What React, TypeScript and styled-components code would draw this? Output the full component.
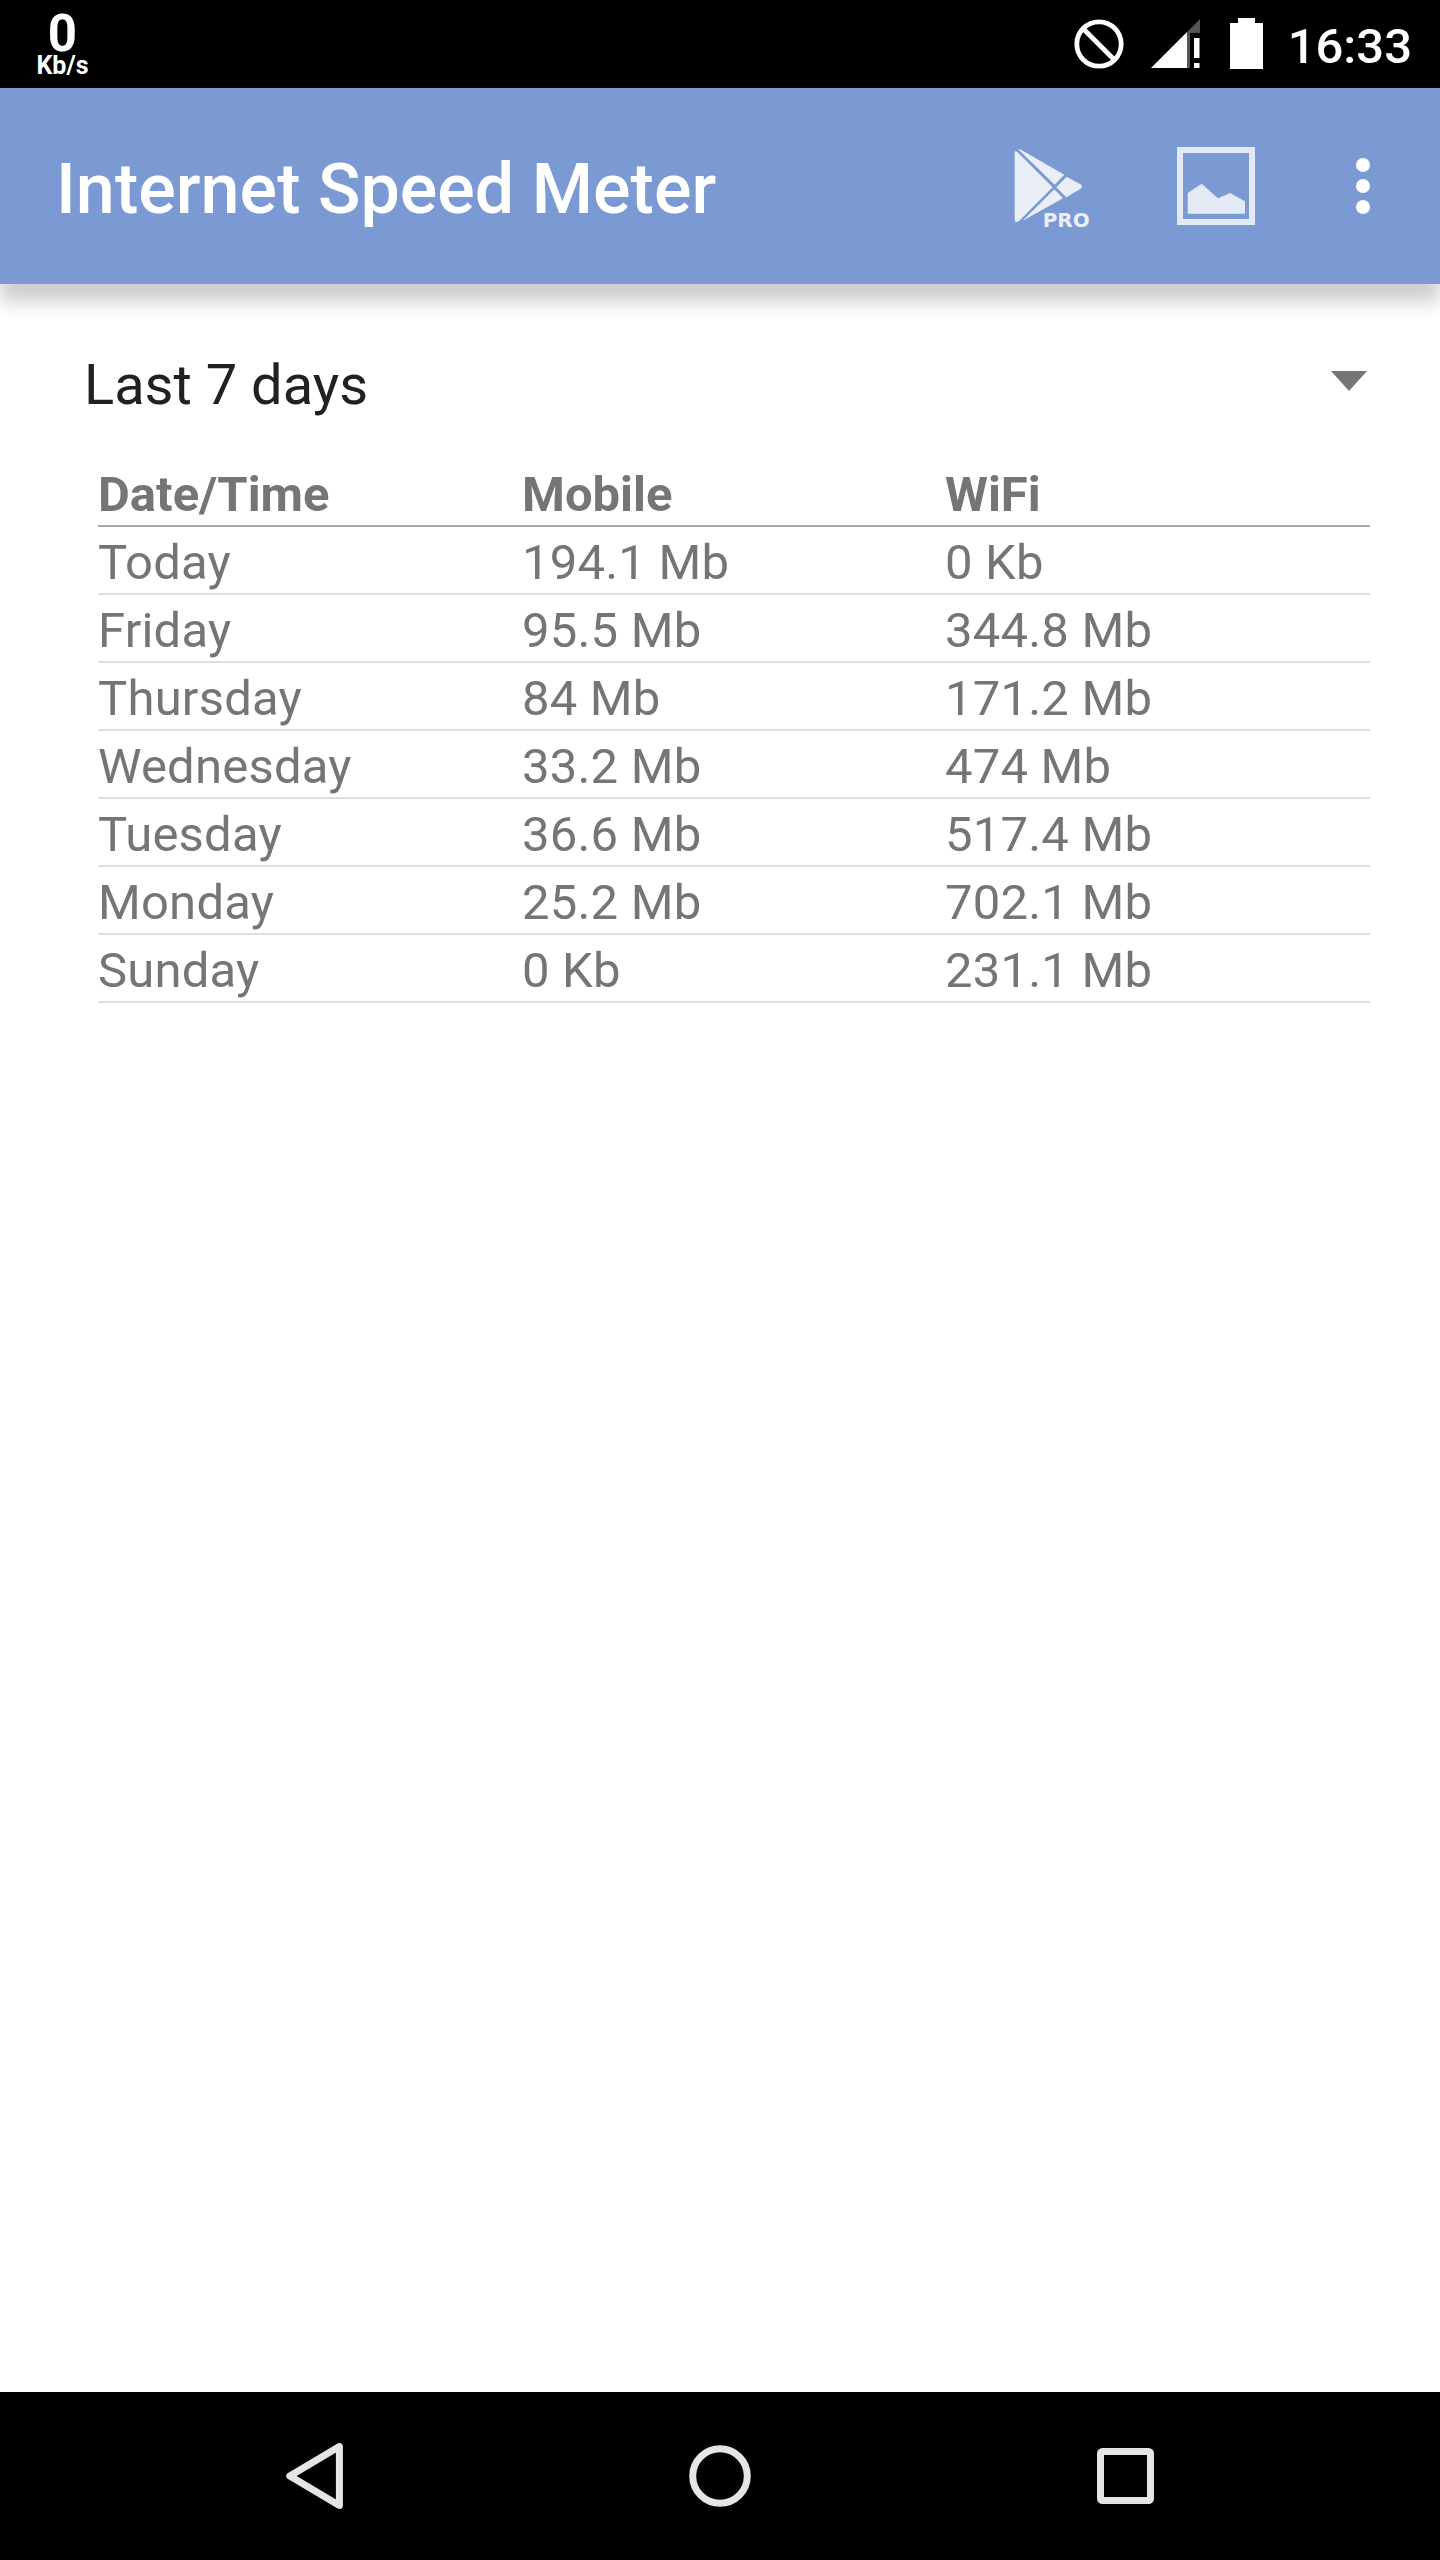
import { FC } from 'react'
import styled, { createGlobalStyle } from 'styled-components'

const usage = [
  { day: 'Today', mobile: '194.1 Mb', wifi: '0 Kb' },
  { day: 'Friday', mobile: '95.5 Mb', wifi: '344.8 Mb' },
  { day: 'Thursday', mobile: '84 Mb', wifi: '171.2 Mb' },
  { day: 'Wednesday', mobile: '33.2 Mb', wifi: '474 Mb' },
  { day: 'Tuesday', mobile: '36.6 Mb', wifi: '517.4 Mb' },
  { day: 'Monday', mobile: '25.2 Mb', wifi: '702.1 Mb' },
  { day: 'Sunday', mobile: '0 Kb', wifi: '231.1 Mb' },
]

const BlockedIcon: FC = () => (
  <svg width="50" height="50" viewBox="0 0 50 50" fill="none" stroke="#fff" strokeWidth="4.8">
    <circle cx="25" cy="25" r="22.2" />
    <path d="M9.5 10 40 40.5" />
  </svg>
)

const SignalIcon: FC = () => (
  <svg width="49" height="50" viewBox="0 0 49 50">
    <path d="M36 13 49 0V14H39V49H36Z" fill="#555" />
    <path d="M0 49 36 13V49Z" fill="#fff" />
    <path d="M43 19h5.500v20h-5.500zM43 44h5.500v5h-5.500z" fill="#fff" />
  </svg>
)

const BatteryIcon: FC = () => (
  <svg width="33" height="51" viewBox="0 0 33 51">
    <path d="M8 0H25V5H33V51H0V5H8Z" fill="#fff" />
  </svg>
)

const PlayProIcon: FC = () => (
  <svg width="86" height="88" viewBox="96 78 258 264" fill="#e9eef7">
    <path d="M104 97q0-6 7-2L218 202 117 303q-13 8-13-4Z" />
    <path d="M116 89q1-3 7 0L253 164 224 194Z" />
    <path d="M260 170 301 193q10 7 0 14L259 232 229 202Z" />
    <path d="M223 208 249 235 128 302Z" />
    <text x="188" y="320" fontFamily="DejaVu Sans, sans-serif" fontWeight="bold" fontSize="60">
      PRO
    </text>
  </svg>
)

const PictureIcon: FC = () => (
  <svg width="78" height="78" viewBox="0 0 78 78">
    <rect x="3" y="3" width="72" height="72" fill="none" stroke="#e3eaf6" strokeWidth="6" />
    <path d="M10.700 46 24.700 36.700 41 51.300 53 46 68 54.300V66.700H10.700Z" fill="#e3eaf6" />
  </svg>
)

const MoreIcon: FC = () => (
  <svg width="14" height="56" viewBox="0 0 14 56" fill="#fff">
    <circle cx="7" cy="7" r="7" />
    <circle cx="7" cy="28" r="7" />
    <circle cx="7" cy="49" r="7" />
  </svg>
)

const BackIcon: FC = () => (
  <svg width="57" height="66" viewBox="0 0 57 66">
    <path d="M53.400 3.600V62.400L3.800 33Z" fill="none" stroke="#e5e5e5" strokeWidth="7" strokeLinejoin="round" />
  </svg>
)

const HomeIcon: FC = () => (
  <svg width="62" height="62" viewBox="0 0 62 62">
    <circle cx="31" cy="31" r="27.300" fill="none" stroke="#e5e5e5" strokeWidth="7" />
  </svg>
)

const RecentsIcon: FC = () => (
  <svg width="57" height="56" viewBox="0 0 57 56">
    <rect x="3.500" y="3.500" width="50" height="49" rx="2" fill="none" stroke="#e5e5e5" strokeWidth="7" />
  </svg>
)

const App: FC = () => (
  <Screen>
    <GlobalStyle />
    <StatusBar>
      <Speed>
        <SpeedValue>0</SpeedValue>
        <SpeedUnit>Kb/s</SpeedUnit>
      </Speed>
      <StatusIcons>
        <BlockedIcon />
        <SignalIcon />
        <BatteryIcon />
      </StatusIcons>
      <Clock>16:33</Clock>
    </StatusBar>
    <AppBar>
      <Title>Internet Speed Meter</Title>
      <PlayAction $gap={79}>
        <PlayProIcon />
      </PlayAction>
      <Action $gap={101}>
        <PictureIcon />
      </Action>
      <Action $gap={70}>
        <MoreIcon />
      </Action>
    </AppBar>
    <Content>
      <Spinner>
        <span>Last 7 days</span>
        <Arrow viewBox="0 0 36 20">
          <path d="M0 0H36L18 20Z" />
        </Arrow>
      </Spinner>
      <HeaderRow>
        <span>Date/Time</span>
        <span>Mobile</span>
        <span>WiFi</span>
      </HeaderRow>
      {usage.map(({ day, mobile, wifi }) => (
        <Row key={day}>
          <span>{day}</span>
          <span>{mobile}</span>
          <span>{wifi}</span>
        </Row>
      ))}
    </Content>
    <NavBar>
      <BackIcon />
      <HomeIcon />
      <RecentsIcon />
    </NavBar>
  </Screen>
)

const GlobalStyle = createGlobalStyle`
  * {
    box-sizing: border-box;
  }
  body {
    margin: 0;
    font-family: Roboto, sans-serif;
  }
  svg {
    display: block;
    flex: none;
  }
`

const Screen = styled.div`
  display: flex;
  flex-direction: column;
  width: 1440px;
  height: 2560px;
  background: #fff;
`

const StatusBar = styled.div`
  display: flex;
  height: 88px;
  padding-right: 28px;
  color: #fff;
  background: #000;
`

const Speed = styled.div`
  display: flex;
  flex-direction: column;
  align-items: center;
  width: 125px;
  padding-top: 13px;
  font-weight: bold;
`

const SpeedValue = styled.div`
  font-size: 51px;
  line-height: 41px;
`

const SpeedUnit = styled.div`
  font-size: 25px;
  line-height: 24px;
`

const StatusIcons = styled.div`
  display: flex;
  gap: 27px;
  margin-left: auto;
  padding-top: 19px;

  svg:last-child {
    margin: -1px 0 0 3px;
  }
`

const Clock = styled.div`
  margin-left: 25px;
  padding-top: 18px;
  font-size: 49px;
  line-height: 57px;
  font-weight: 500;
`

const AppBar = styled.div`
  display: flex;
  align-items: center;
  height: 196px;
  padding: 0 0 0 56px;
  background: #7b9ad3;
  box-shadow: 0 18px 18px rgba(0, 0, 0, 0.2);
  clip-path: inset(0 0 -40px 0);
`

const Title = styled.h1`
  flex: 1;
  margin: 0;
  padding-top: 5px;
  font-size: 70px;
  line-height: 82px;
  font-weight: 500;
  letter-spacing: 0.05px;
  color: #fff;
`

const Action = styled.div<{ $gap: number }>`
  margin-right: ${({ $gap }) => $gap}px;
`

const PlayAction = styled(Action)`
  padding-top: 8px;
`

const Content = styled.div`
  flex: 1;
  padding: 0 70px 0 98px;
`

const Spinner = styled.div`
  display: flex;
  justify-content: space-between;
  align-items: center;
  height: 176px;
  margin-left: -14px;
  padding: 26px 3px 0 0;
  font-size: 56px;
  line-height: 66px;
  color: #212121;
`

const Arrow = styled.svg`
  width: 36px;
  height: 20px;
  margin-bottom: 8px;
  fill: #757575;
`

const Row = styled.div`
  display: grid;
  grid-template-columns: 424px 423px 425px;
  height: 68px;
  padding-top: 7px;
  font-size: 49px;
  line-height: 58px;
  letter-spacing: 0.2px;
  color: #757575;
  border-bottom: 2px solid #dedede;
`

const HeaderRow = styled(Row)`
  height: 67px;
  padding-top: 6px;
  font-weight: bold;
  letter-spacing: 0;
  border-color: #a8a8a8;
`

const NavBar = styled.div`
  display: flex;
  justify-content: space-between;
  align-items: center;
  height: 168px;
  padding: 0 286px;
  background: #000;
`

export default App
